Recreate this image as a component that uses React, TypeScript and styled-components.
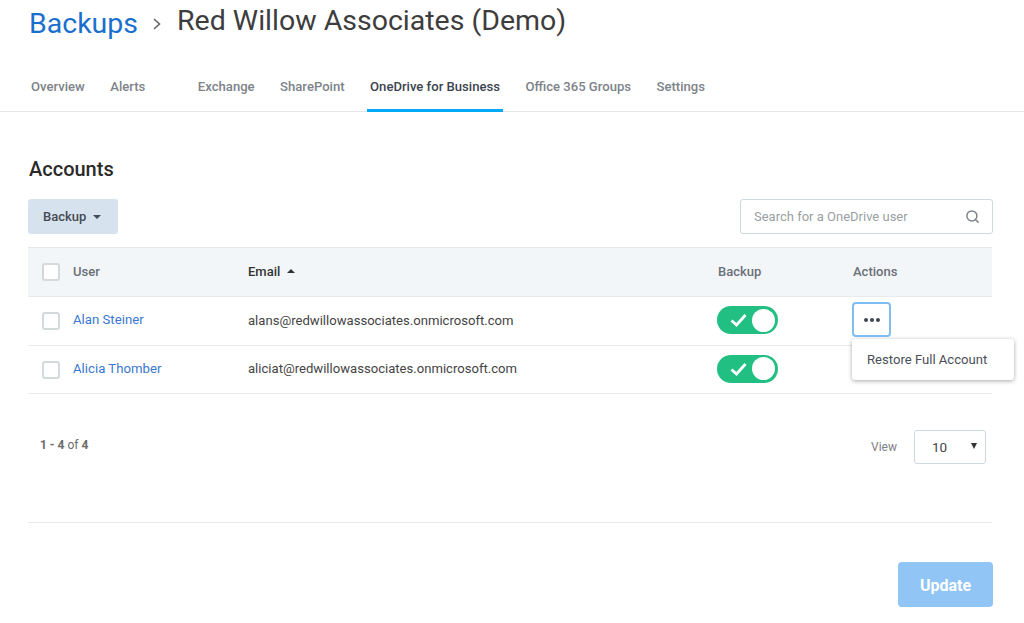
import React from 'react'
import styled, { createGlobalStyle } from 'styled-components'
import { Search } from 'lucide-react'

const GlobalStyle = createGlobalStyle`
  html, body {
    margin: 0;
    background: #fff;
    font-family: Roboto, "Liberation Sans", sans-serif;
    color: #333;
  }
  * { box-sizing: border-box; }
`

const Page = styled.div`
  width: 1024px;
  height: 623px;
  overflow: hidden;
`

const Breadcrumb = styled.div`
  display: flex;
  align-items: flex-start;
  height: 67px;
  padding: 3px 0 0 29px;
`

const BackLink = styled.a`
  margin-top: 3px;
  font-size: 28.5px;
  line-height: 36px;
  color: #1a6fce;
`

const Chevron = styled.svg`
  width: 10px;
  height: 14px;
  margin: 14px 15px 0 14px;
`

const PageTitle = styled.h1`
  margin: 0;
  font-size: 28.5px;
  line-height: 36px;
  font-weight: 400;
  color: #3d3d3d;
`

const Tabs = styled.nav`
  display: flex;
  height: 45px;
  padding-left: 28px;
  border-bottom: 1px solid #e3e5e8;
`

const Tab = styled.a<{ $active?: boolean; $spaced?: boolean }>`
  height: 45px;
  margin-right: 19.5px;
  margin-left: ${(p) => (p.$spaced ? '27px' : '0')};
  padding: 12px 3px 0;
  font-size: 13.1px;
  line-height: 16px;
  font-weight: 500;
  white-space: nowrap;
  color: ${(p) => (p.$active ? '#3b4450' : '#7d8389')};
  border-bottom: 3px solid ${(p) => (p.$active ? '#00aaf9' : 'transparent')};
`

const Content = styled.main`
  padding: 44px 32px 0 28px;
`

const SectionTitle = styled.h2`
  margin: 0 0 17px 1px;
  font-size: 20px;
  line-height: 26px;
  font-weight: 500;
  color: #2b2b2b;
`

const Toolbar = styled.div`
  display: flex;
  justify-content: space-between;
  align-items: center;
  margin-bottom: 13px;
`

const BulkButton = styled.button`
  display: flex;
  align-items: center;
  gap: 7px;
  width: 90px;
  height: 35px;
  padding: 0 0 0 15px;
  border: 0;
  border-radius: 3px;
  background: #d6e2ee;
  font-family: inherit;
  font-size: 13px;
  font-weight: 500;
  color: #454b52;
`

const Caret = styled.span<{ $up?: boolean }>`
  width: 0;
  height: 0;
  border-left: 4px solid transparent;
  border-right: 4px solid transparent;
  ${(p) => (p.$up ? 'border-bottom: 4px solid #333;' : 'border-top: 4px solid #454b52;')}
`

const SearchBox = styled.div`
  display: flex;
  align-items: center;
  justify-content: space-between;
  width: 253px;
  height: 35px;
  margin-right: -1px;
  padding: 0 12px 0 13px;
  border: 1px solid #cdd8e3;
  border-radius: 3px;
  font-size: 13px;
  color: #9a9fa5;
`

const Row = styled.div<{ $head?: boolean; $height: number }>`
  position: relative;
  display: grid;
  grid-template-columns: 220px 470px 135px 1fr;
  align-items: center;
  height: ${(p) => p.$height}px;
  font-size: 13px;
  background: ${(p) => (p.$head ? '#f3f6f9' : '#fff')};
  border-bottom: 1px solid #e8ebee;
  ${(p) => (p.$head ? 'border-top: 1px solid #e3e7ea;' : '')}
`

const UserCell = styled.div`
  display: flex;
  align-items: center;
  gap: 13px;
  padding-left: 14px;
`

const Checkbox = styled.span`
  width: 18px;
  height: 18px;
  border: 2px solid #d4d9dc;
  border-radius: 3px;
  background: #fff;
`

const HeadLabel = styled.span<{ $dark?: boolean }>`
  display: flex;
  align-items: center;
  gap: 7px;
  margin-bottom: 2px;
  font-weight: 500;
  color: ${(p) => (p.$dark ? '#333' : '#6b7078')};
`

const UserLink = styled.a`
  margin-top: -3px;
  font-size: 13.2px;
  color: #3a78d0;
`

const EmailText = styled.span`
  margin-bottom: 2px;
  font-size: 13.1px;
  color: #444;
`

const Toggle = styled.div`
  display: flex;
  align-items: center;
  justify-content: space-between;
  width: 61px;
  height: 28px;
  margin: 0 0 2px -1px;
  padding: 0 3px 0 13px;
  border-radius: 14px;
  background: #22bf82;
`

const Knob = styled.span`
  width: 23px;
  height: 23px;
  border-radius: 50%;
  background: #fff;
`

const ActionsButton = styled.button`
  display: flex;
  align-items: center;
  justify-content: center;
  gap: 2px;
  width: 39px;
  height: 35px;
  margin: 0 0 3px -1px;
  padding: 0;
  border: 2px solid #7fbdf5;
  border-radius: 4px;
  background: #fff;
`

const Dot = styled.span`
  width: 4px;
  height: 4px;
  border-radius: 50%;
  background: #3f4654;
`

const Menu = styled.div`
  position: absolute;
  z-index: 2;
  left: 824px;
  top: 42px;
  width: 162px;
  height: 41px;
  padding: 13px 0 0 15px;
  border-radius: 3px;
  background: #fff;
  box-shadow: 0 1px 4px rgba(0, 0, 0, 0.35);
  font-size: 13.1px;
  line-height: 16px;
  color: #4a4f57;
`

const Pagination = styled.div`
  display: flex;
  justify-content: space-between;
  height: 129px;
  padding: 36px 6px 0 12px;
  border-bottom: 1px solid #e6e8ea;
  margin-bottom: 39px;
`

const PageCount = styled.span`
  margin-top: 8px;
  font-size: 12px;
  line-height: 14px;
  color: #6b6b6b;

  b {
    font-weight: 700;
  }
`

const ViewControl = styled.div`
  display: flex;
  align-items: flex-start;
  gap: 17px;
  font-size: 12px;
  color: #7d8084;
`

const ViewLabel = styled.span`
  margin-top: 9px;
  line-height: 16px;
`

const Select = styled.div`
  display: flex;
  align-items: center;
  justify-content: space-between;
  width: 72px;
  height: 34px;
  padding: 0 8px 0 17px;
  border: 1px solid #cdd8e3;
  border-radius: 3px;
  font-size: 13.5px;
  color: #444;
`

const SelectArrow = styled.span`
  width: 0;
  height: 0;
  margin-top: -2px;
  border-left: 3.5px solid transparent;
  border-right: 3.5px solid transparent;
  border-top: 6px solid #333;
`

const Footer = styled.div`
  display: flex;
  justify-content: flex-end;
  margin-right: -1px;
`

const UpdateButton = styled.button`
  width: 95px;
  height: 45px;
  padding: 2px 0 0;
  border: 0;
  border-radius: 4px;
  background: #90c5f5;
  font-family: inherit;
  font-size: 16px;
  font-weight: 700;
  color: #fff;
`

const accounts = [
  { name: 'Alan Steiner', email: 'alans@redwillowassociates.onmicrosoft.com', open: true },
  { name: 'Alicia Thomber', email: 'aliciat@redwillowassociates.onmicrosoft.com', open: false },
]

const tabs = ['Exchange', 'SharePoint', 'OneDrive for Business', 'Office 365 Groups', 'Settings']

const CheckMark = () => (
  <svg width="17" height="14" viewBox="0 0 17 14" fill="none">
    <path d="M1.5 7.5L6.5 12L15.5 2" stroke="#fff" strokeWidth="2.8" />
  </svg>
)

export default function App() {
  return (
    <Page>
      <GlobalStyle />
      <Breadcrumb>
        <BackLink>Backups</BackLink>
        <Chevron viewBox="0 0 10 14" fill="none">
          <path d="M2 2L7.5 7L2 12" stroke="#666" strokeWidth="1.6" />
        </Chevron>
        <PageTitle>Red Willow Associates (Demo)</PageTitle>
      </Breadcrumb>
      <Tabs>
        <Tab>Overview</Tab>
        <Tab>Alerts</Tab>
        {tabs.map((t, i) => (
          <Tab key={t} $spaced={i === 0} $active={t === 'OneDrive for Business'}>
            {t}
          </Tab>
        ))}
      </Tabs>
      <Content>
        <SectionTitle>Accounts</SectionTitle>
        <Toolbar>
          <BulkButton>
            Backup <Caret />
          </BulkButton>
          <SearchBox>
            Search for a OneDrive user
            <Search size={15} color="#808488" strokeWidth={2.4} />
          </SearchBox>
        </Toolbar>
        <Row $head $height={50}>
          <UserCell>
            <Checkbox />
            <HeadLabel>User</HeadLabel>
          </UserCell>
          <HeadLabel $dark>
            Email <Caret $up />
          </HeadLabel>
          <HeadLabel>Backup</HeadLabel>
          <HeadLabel>Actions</HeadLabel>
        </Row>
        {accounts.map((a) => (
          <Row key={a.email} $height={a.open ? 49 : 48}>
            <UserCell>
              <Checkbox />
              <UserLink>{a.name}</UserLink>
            </UserCell>
            <EmailText>{a.email}</EmailText>
            <Toggle>
              <CheckMark />
              <Knob />
            </Toggle>
            {a.open && (
              <>
                <ActionsButton>
                  <Dot />
                  <Dot />
                  <Dot />
                </ActionsButton>
                <Menu>Restore Full Account</Menu>
              </>
            )}
          </Row>
        ))}
        <Pagination>
          <PageCount>
            <b>1 - 4</b> of <b>4</b>
          </PageCount>
          <ViewControl>
            <ViewLabel>View</ViewLabel>
            <Select>
              10
              <SelectArrow />
            </Select>
          </ViewControl>
        </Pagination>
        <Footer>
          <UpdateButton>Update</UpdateButton>
        </Footer>
      </Content>
    </Page>
  )
}
